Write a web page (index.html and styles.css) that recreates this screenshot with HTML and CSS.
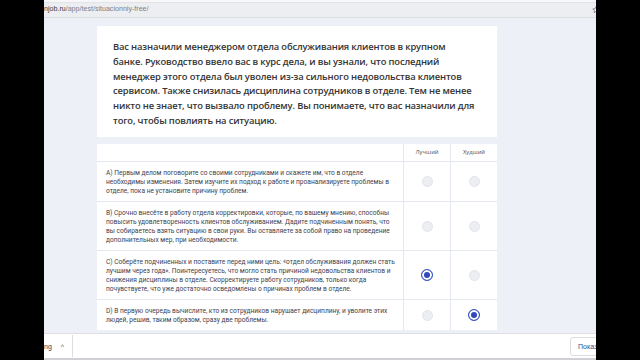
FILE: index.html
```html
<!DOCTYPE html>
<html lang="ru">
<head>
<meta charset="utf-8">
<title>Ситуационный тест</title>
<link rel="stylesheet" href="styles.css">
</head>
<body>
<div class="screen">
  <div class="side"></div>
  <div class="browser">
    <div class="tabstrip"></div>
    <div class="toolbar">
      <span class="url"><span class="host">njob.ru</span>/app/test/situacionniy-free/</span>
      <svg class="star" width="8" height="8" viewBox="0 0 10 10"><path d="M5 .8l1.2 2.6 2.8.3-2.1 1.9.6 2.8L5 7 2.5 8.4l.6-2.8L1 3.7l2.8-.3z" fill="none" stroke="#6b6e75" stroke-width=".9"/></svg>
    </div>
    <div class="page">
      <div class="content">
        <section class="question">
          <p>Вас назначили менеджером отдела обслуживания клиентов в крупном<br>банке. Руководство ввело вас в курс дела, и вы узнали, что последний<br>менеджер этого отдела был уволен из-за сильного недовольства клиентов<br>сервисом. Также снизилась дисциплина сотрудников в отделе. Тем не менее<br>никто не знает, что вызвало проблему. Вы понимаете, что вас назначили для<br>того, чтобы повлиять на ситуацию.</p>
        </section>
        <section class="answers">
          <div class="cell head"></div>
          <div class="cell head col">Лучший</div>
          <div class="cell head col">Худший</div>

          <div class="cell text">А) Первым делом поговорите со своими сотрудниками и скажете им, что в отделе<br>необходимы изменения. Затем изучите их подход к работе и проанализируете проблемы в<br>отделе, пока не установите причину проблем.</div>
          <div class="cell col"><span class="radio"></span></div>
          <div class="cell col"><span class="radio"></span></div>

          <div class="cell text">В) Срочно внесёте в работу отдела корректировки, которые, по вашему мнению, способны<br>повысить удовлетворенность клиентов обслуживанием. Дадите подчиненным понять, что<br>вы собираетесь взять ситуацию в свои руки. Вы оставляете за собой право на проведение<br>дополнительных мер, при необходимости.</div>
          <div class="cell col"><span class="radio"></span></div>
          <div class="cell col"><span class="radio"></span></div>

          <div class="cell text">С) Соберёте подчиненных и поставите перед ними цель: «отдел обслуживания должен стать<br>лучшим через года». Поинтересуетесь, что могло стать причиной недовольства клиентов и<br>снижения дисциплины в отделе. Скорректируете работу сотрудников, только когда<br>почувствуете, что уже достаточно осведомлены о причинах проблем в отделе.</div>
          <div class="cell col"><span class="radio checked"></span></div>
          <div class="cell col"><span class="radio"></span></div>

          <div class="cell text last">D) В первую очередь вычислите, кто из сотрудников нарушает дисциплину, и уволите этих<br>людей, решив, таким образом, сразу две проблемы.</div>
          <div class="cell col last"><span class="radio"></span></div>
          <div class="cell col last"><span class="radio checked"></span></div>
        </section>
      </div>
    </div>
    <div class="downloads">
      <span class="file">ng</span>
      <span class="caret">^</span>
      <span class="sep"></span>
      <span class="show-all">Показать все</span>
    </div>
  </div>
  <div class="side"></div>
</div>
</body>
</html>
```

FILE: styles.css
```css
* { box-sizing: border-box; }
html, body { margin: 0; padding: 0; }
body {
  width: 640px;
  height: 360px;
  overflow: hidden;
  background: #000;
  font-family: "Open Sans", "Noto Sans", sans-serif;
}
.screen { display: flex; height: 360px; }
.side { width: 44px; flex: none; background: #000; position: relative; z-index: 1; }
.browser {
  width: 552px;
  flex: none;
  display: flex;
  flex-direction: column;
  overflow: hidden;
  background: #fff;
}
.tabstrip {
  height: 3px;
  background: #f7f7f9;
  border-bottom: 1px solid #e2e3e7;
}
.toolbar {
  height: 15px;
  background: #eceef1;
  border-bottom: 1px solid #dcdee2;
  display: flex;
  align-items: center;
  justify-content: space-between;
  font: 7.1px/1 "Liberation Sans", Arial, sans-serif;
  color: #7d8088;
  white-space: nowrap;
}
.host { color: #3a3c42; }
.star { margin-right: -4px; }
.page {
  height: 315px;
  background: #edf0f7;
  padding: 8px 0 0 53px;
}
.content {
  width: 400px;
  display: flex;
  flex-direction: column;
  gap: 7px;
}
.question {
  height: 111px;
  background: #fff;
  padding: 14px 16px 0;
}
.question p {
  margin: 0;
  white-space: nowrap;
  font-weight: 600;
  font-size: 9.4px;
  letter-spacing: -0.15px;
  line-height: 14.8px;
  color: #343434;
}
.answers {
  background: #fff;
  display: grid;
  grid-template-columns: 306px 47px 47px;
}
.cell {
  border-bottom: 1px solid #e5e8ee;
}
.cell.last { border-bottom: none; }
.col {
  border-left: 1px solid #e5e8ee;
  display: flex;
  align-items: center;
  justify-content: center;
}
.head {
  height: 18px;
  font: 5.8px/1 "Open Sans", sans-serif;
  color: #4a4d55;
}
.text {
  padding: 7px 9px 5px;
  font: 6.6px/9px Roboto, "Liberation Sans", sans-serif;
  color: #3d4250;
  white-space: nowrap;
}
.radio {
  width: 11px;
  height: 11px;
  border-radius: 50%;
  background: #eceef2;
  border: 1px solid #e1e4ea;
}
.radio.checked {
  width: 12px;
  height: 12px;
  background: #2f48bb;
  border: 1.5px solid #3d57c9;
  box-shadow: inset 0 0 0 2px #fff;
}
.downloads {
  flex: 1;
  display: flex;
  align-items: center;
  background: #fff;
  border-top: 1px solid #e0e0e2;
  border-bottom: 2px solid #cfd0d3;
  font: 7px/1 "Liberation Sans", Arial, sans-serif;
  color: #3b3d42;
  white-space: nowrap;
}
.caret { margin-left: 9px; font-size: 7px; color: #555; }
.sep {
  width: 1px;
  height: 22px;
  background: #dcdde0;
  margin-left: 8px;
}
.show-all {
  flex: none;
  margin-left: auto;
  margin-right: -34px;
  width: 60px;
  padding: 5px 7px;
  border: 1px solid #dadce0;
  border-radius: 3px;
  color: #2f4f8f;
}
```
